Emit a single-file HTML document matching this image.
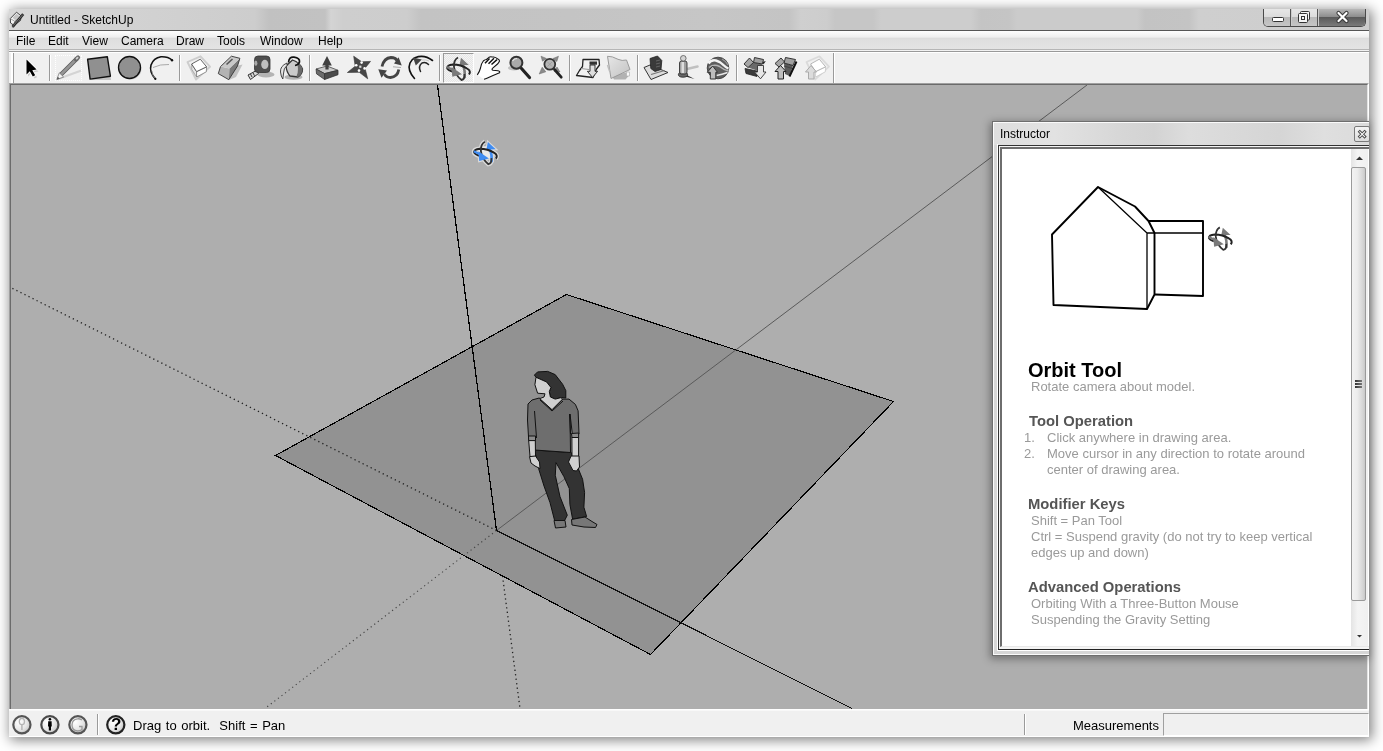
<!DOCTYPE html>
<html><head><meta charset="utf-8">
<style>
*{margin:0;padding:0;box-sizing:border-box}
html,body{width:1383px;height:751px;overflow:hidden;background:#fff;font-family:"Liberation Sans",sans-serif;}
.a{position:absolute}
svg.a{overflow:visible}
.t{position:absolute;white-space:nowrap;font-size:12px;color:#000;line-height:14px;will-change:transform}
#shadow{position:absolute;left:9px;top:9px;width:1360px;height:728px;background:#f0f0f0;box-shadow:2px 2px 12px 1px rgba(0,0,0,0.5);}
#title{position:absolute;left:9px;top:9px;width:1360px;height:22px;background:linear-gradient(90deg,#d8d8d8 0px,#d2d2d2 120px,#cdcdcd 246px,#c1c1c1 260px,#c2c2c2 316px,#d4d4d4 322px,#cecece 334px,#cdcdcd 398px,#c3c3c3 412px,#c4c4c4 560px,#c6c6c6 700px,#c4c4c4 780px,#cfcfcf 792px,#cdcdcd 818px,#c6c6c6 826px,#c6c6c6 864px,#cdcdcd 872px,#cdcdcd 962px,#c4c4c4 972px,#c5c5c5 1000px,#cbcbcb 1008px,#cbcbcb 1128px,#c3c3c3 1136px,#c4c4c4 1180px,#cfcfcf 1190px,#cdcdcd 1360px);border-bottom:1px solid #555;}
#menu{position:absolute;left:9px;top:31px;width:1360px;height:18px;background:linear-gradient(#fdfdfd 0px,#f6f6f6 3px,#eeeeee 6px,#dcdcdc 7.5px,#dfdfdf 9px,#e4e4e4 18px);}
.hl{position:absolute;left:9px;width:1360px;height:1px}
#tb{position:absolute;left:9px;top:53px;width:1360px;height:30px;background:#f0f0f0;}
#vp{position:absolute;left:9px;top:83px;width:1360px;height:627px;background:#aeaeae;border-top:1px solid #a0a0a0;border-left:1px solid #a0a0a0;border-right:1px solid #fff;border-bottom:1px solid #fff;overflow:hidden}
#vpi{position:absolute;left:0;top:0;right:0;bottom:0;border-top:1px solid #6b6b6b;border-left:1px solid #6b6b6b;border-right:1px solid #e3e3e3;overflow:hidden}
#sb{position:absolute;left:9px;top:710px;width:1360px;height:27px;background:#f0f0f0;border-bottom:1px solid #fff}
.vs{position:absolute;width:1px;background:#9a9a9a;}
</style></head>
<body>
<div id="shadow"></div>
<div id="title"></div>
<div class="t" style="left:30px;top:13px">Untitled - SketchUp</div>
<div id="menu"></div>
<div class="hl" style="top:49px;background:#b6b6b6"></div>
<div class="hl" style="top:50px;background:#f2f2f2"></div>
<div class="hl" style="top:51px;background:#999"></div>
<div class="hl" style="top:52px;background:#fff"></div>
<div class="t" style="left:16px;top:34px">File</div>
<div class="t" style="left:48px;top:34px">Edit</div>
<div class="t" style="left:82px;top:34px">View</div>
<div class="t" style="left:121px;top:34px">Camera</div>
<div class="t" style="left:176px;top:34px">Draw</div>
<div class="t" style="left:217px;top:34px">Tools</div>
<div class="t" style="left:260px;top:34px">Window</div>
<div class="t" style="left:318px;top:34px">Help</div>
<div id="tb"></div>
<!-- title icon -->
<svg class="a" style="left:0;top:0" width="40" height="40" viewBox="0 0 40 40">
<path d="M10.3 18.5 L16.5 12.2 L21.2 16 L20.5 20.5 L14 25.3 L10.5 23 Z" fill="#f2f2f2" stroke="#333" stroke-width="0.9" stroke-linejoin="round"/>
<path d="M12.5 17.8 L16.5 13.8 L19.5 16.3 L15.2 20 Z" fill="#c4c4c4"/>
<path d="M10.5 18.7 L14.6 21.2 L21 16.2 M14.6 21.2 L14 25" fill="none" stroke="#8a8a8a" stroke-width="0.7"/>
<path d="M12.6 26.8 L23.2 14.2" stroke="#2a2a2a" stroke-width="2.7"/>
<path d="M13.3 25.6 L22.8 14.6" stroke="#8a8a8a" stroke-width="0.8"/>
<path d="M11.8 27.8 L13.4 25.2 L14 26.6 Z" fill="#444"/>
</svg>
<!-- caption buttons -->
<div class="a" style="left:1263px;top:9px;width:103px;height:18px;border:1px solid #4a4a4a;border-top:none;border-radius:0 0 5px 5px;overflow:hidden;background:#ccc">
  <div class="a" style="left:0;top:0;width:27px;height:17px;background:linear-gradient(#e6e6e6 0%,#dcdcdc 45%,#b9b9b9 50%,#c6c6c6 100%);border-right:1px solid #555"></div>
  <div class="a" style="left:28px;top:0;width:26px;height:17px;background:linear-gradient(#e6e6e6 0%,#dcdcdc 45%,#b9b9b9 50%,#c6c6c6 100%);border-right:1px solid #555"></div>
  <div class="a" style="left:55px;top:0;width:47px;height:17px;background:linear-gradient(#b8b8b8 0%,#8e8e8e 45%,#5a5a5a 50%,#7a7a7a 100%);"></div>
</div>
<svg class="a" style="left:0;top:0" width="1" height="1">
<rect x="1272.5" y="17.5" width="11" height="4" rx="1" fill="#fff" stroke="#333" stroke-width="1"/>
<rect x="1300.5" y="11.5" width="9" height="8.5" rx="1" fill="#f4f4f4" stroke="#333" stroke-width="1"/>
<rect x="1298.5" y="13.5" width="9" height="9" rx="1" fill="#f4f4f4" stroke="#333" stroke-width="1"/>
<rect x="1301.5" y="16.5" width="3" height="3" fill="none" stroke="#333" stroke-width="1"/>
<path d="M1338.5 13 L1346.5 21 M1346.5 13 L1338.5 21" stroke="#3a3a3a" stroke-width="4.2" stroke-linecap="round"/>
<path d="M1338.5 13 L1346.5 21 M1346.5 13 L1338.5 21" stroke="#fff" stroke-width="2.2" stroke-linecap="round"/>
</svg>
<!-- toolbar grip & separators -->
<div class="vs" style="left:11px;top:53px;height:30px;background:#fff;width:2px"></div>
<div class="vs" style="left:13px;top:53px;height:30px;background:#9a9a9a"></div>
<div class="vs" style="left:49px;top:55px;height:26px"></div><div class="vs" style="left:50px;top:55px;height:26px;background:#fff"></div>
<div class="vs" style="left:179px;top:55px;height:26px"></div><div class="vs" style="left:180px;top:55px;height:26px;background:#fff"></div>
<div class="vs" style="left:309px;top:55px;height:26px"></div><div class="vs" style="left:310px;top:55px;height:26px;background:#fff"></div>
<div class="vs" style="left:439px;top:55px;height:26px"></div><div class="vs" style="left:440px;top:55px;height:26px;background:#fff"></div>
<div class="vs" style="left:569px;top:55px;height:26px"></div><div class="vs" style="left:570px;top:55px;height:26px;background:#fff"></div>
<div class="vs" style="left:637px;top:55px;height:26px"></div><div class="vs" style="left:638px;top:55px;height:26px;background:#fff"></div>
<div class="vs" style="left:736px;top:55px;height:26px"></div><div class="vs" style="left:737px;top:55px;height:26px;background:#fff"></div>
<div class="vs" style="left:833px;top:53px;height:30px"></div><div class="vs" style="left:834px;top:53px;height:30px;background:#fff"></div>
<!-- focus rect around pencil -->
<div class="a" style="left:55px;top:55px;width:27px;height:26px;border:1px dotted #fff"></div>
<!-- pressed orbit button -->
<div class="a" style="left:443px;top:53px;width:31px;height:30px;border-top:1px solid #999;border-left:1px solid #999;border-right:1px solid #fff;border-bottom:1px solid #fff;background-color:#f4f4f4;background-image:linear-gradient(45deg,#e6e6e6 25%,transparent 25%,transparent 75%,#e6e6e6 75%),linear-gradient(45deg,#e6e6e6 25%,transparent 25%,transparent 75%,#e6e6e6 75%);background-size:2px 2px;background-position:0 0,1px 1px"></div>
<svg class="a" style="left:0;top:0" width="1383" height="751" viewBox="0 0 1383 751">
<!-- select arrow -->
<path d="M28 62 L28 76.5 L31.5 73.5 L34.5 78.5 L37 77.3 L34.2 72.3 L38.5 71.5 Z" fill="#000" opacity="0.15"/>
<path d="M26.5 59.5 L26.5 74.5 L29.8 71.3 L32.8 76.6 L35.2 75.3 L32.3 70.2 L36.6 69.5 Z" fill="#fff" stroke="#fff" stroke-width="1.6" stroke-linejoin="round"/>
<path d="M26.5 59.5 L26.5 74.5 L29.8 71.3 L32.8 76.6 L35.2 75.3 L32.3 70.2 L36.6 69.5 Z" fill="#000"/>
<!-- pencil -->
<path d="M58 79 L80 71" stroke="#d4d4d4" stroke-width="2.2" stroke-linecap="round"/>
<path d="M61 74.5 L77 58.5" stroke="#5a5a5a" stroke-width="4.2"/>
<path d="M61 74.5 L77 58.5" stroke="#969696" stroke-width="2.6"/>
<path d="M76 59.5 L78 57.5" stroke="#6a6a6a" stroke-width="4.2" stroke-linecap="round"/>
<path d="M76.6 58.6 L77.6 57.6" stroke="#d0d0d0" stroke-width="1.8" stroke-linecap="round"/>
<path d="M56.8 79.5 L59.3 72.8 L63.6 77 Z" fill="#f4f4f4" stroke="#6a6a6a" stroke-width="0.7" stroke-linejoin="round"/>
<path d="M56.8 79.5 L57.8 76.8 L59.6 78.5 Z" fill="#555"/>
<!-- rectangle -->
<path d="M92 78 L110.5 76 L111 80 L91 80 Z" fill="#c4c4c4"/>
<path d="M87.6 59.2 L107.3 56.7 L110.4 76.2 L90.1 79.1 Z" fill="#909090" stroke="#111" stroke-width="1.4" stroke-linejoin="round"/>
<!-- circle -->
<circle cx="130.5" cy="68.5" r="11" fill="#c8c8c8"/>
<circle cx="129.5" cy="67.5" r="11" fill="#909090" stroke="#111" stroke-width="1.3"/>
<!-- arc -->
<path d="M153 67.5 Q160 64 169 64.5" stroke="#a0a0a0" stroke-width="0.9" fill="none"/>
<path d="M155.5 79 Q149 72 151 65 Q153.5 58 161 56.8 Q168 56.5 172 60" stroke="#111" stroke-width="1.6" fill="none" stroke-linecap="round"/>
<circle cx="172" cy="60.3" r="1.2" fill="#111"/><circle cx="155.3" cy="78.8" r="1.1" fill="#111"/>
<path d="M152 71 Q152 76 155 78" stroke="#888" stroke-width="0.8" fill="none"/>
<!-- component -->
<path d="M187.5 62 L200.5 56.3 L210 66.7 L196 79.5 Z" fill="none" stroke="#cdcdcd" stroke-width="1.9" stroke-linejoin="round"/>
<path d="M191.6 64 L196.6 71.6 L196.6 77 L191.8 69.5 Z" fill="#e6e6e6" stroke="#9a9a9a" stroke-width="0.8"/>
<path d="M196.6 71.6 L206.6 66.8 L206.3 71.8 L196.6 77 Z" fill="#fff" stroke="#7a7a7a" stroke-width="0.8"/>
<path d="M191.6 64 L200.3 59.2 L206.6 66.8 L196.6 71.6 Z" fill="#fff" stroke="#555" stroke-width="0.9"/>
<!-- eraser -->
<path d="M236 66 L242.5 64.5 L236 77 L229 80 Z" fill="#c2c2c2"/>
<path d="M218.3 73.6 L220.5 66.6 L229.5 68.5 L228.8 79.7 Z" fill="#b3b3b3"/>
<path d="M229.5 68.5 L239.9 58.3 L237.5 66 L228.8 79.7 Z" fill="#7a7a7a"/>
<path d="M220.5 66.6 L231.4 56.2 L239.9 58.3 L229.5 68.5 Z" fill="#c9c9c9"/>
<path d="M218.3 73.6 L220.5 66.6 L231.4 56.2 L239.9 58.3 L237.5 66 L228.8 79.7 Z" fill="none" stroke="#333" stroke-width="0.9" stroke-linejoin="round"/>
<path d="M226.5 64.5 L232.5 59" stroke="#555" stroke-width="1.6"/>
<!-- tape -->
<ellipse cx="266" cy="74.5" rx="8.5" ry="3" fill="#b4b4b4"/>
<path d="M248 75 L256.5 70.5 L258.5 73.5 L250.5 79.5 Z" fill="#d8d8d8" stroke="#333" stroke-width="1"/>
<path d="M250.5 74 L252 77 M253 72.8 L254.5 75.8" stroke="#333" stroke-width="1"/>
<rect x="254.5" y="56" width="15.5" height="16.5" rx="3.5" fill="#4e4e4e" stroke="#333" stroke-width="0.8"/>
<ellipse cx="264.8" cy="64.4" rx="3.6" ry="4.6" fill="#bfbfbf"/>
<ellipse cx="255.8" cy="63.2" rx="1.6" ry="2.6" fill="#a8a8a8"/>
<!-- paint bucket -->
<ellipse cx="293.5" cy="77.2" rx="9" ry="2.6" fill="#b3b3b3"/>
<path d="M286 66 L292.5 60 Q300 62.5 302.5 69 Q302.5 74 298 77 L290 76 Q286.5 72 286 66 Z" fill="#cacaca" stroke="#333" stroke-width="1.3" stroke-linejoin="round"/>
<path d="M296.5 61.5 Q301 64 302.5 69 Q302.5 74 298 77 L296.5 76.3 Q299.5 70 296.5 61.5 Z" fill="#6a6a6a"/>
<path d="M288.5 62.5 Q289 56.5 294 57.2 Q300 58 299.5 62 Q298.5 65 295 65.5" stroke="#111" stroke-width="1.7" fill="none"/>
<path d="M287 63 Q280 66 280.5 72 Q281 76.5 282.8 79 L283.6 73 Q283.5 68 287 65.5 Z" fill="#e6e6e6" stroke="#333" stroke-width="0.9" stroke-linejoin="round"/>
<!-- push pull -->
<path d="M316.1 69 L327 66 L338 70.3 L324.6 73.6 Z" fill="#c9c9c9" stroke="#444" stroke-width="0.8"/>
<path d="M316.1 69 L324.6 73.6 L324.6 79.5 L316.5 73.8 Z" fill="#6c6c6c" stroke="#333" stroke-width="0.8"/>
<path d="M324.6 73.6 L338 70.3 L338 74.7 L324.6 79.5 Z" fill="#4c4c4c" stroke="#333" stroke-width="0.8"/>
<path d="M327 56 L331.8 65.5 L328.6 65.5 L328.6 69.4 L325.4 69.4 L325.4 65.5 L322.2 65.5 Z" fill="#404040"/>
<!-- move -->
<path d="M353.7 56.2 L361.8 61.8 L370.5 61.4 L365 68.2 L367.7 78.8 L359.3 72.3 L347.4 72.5 L355.2 66.2 Z" fill="#474747" stroke="#333" stroke-width="0.6" stroke-linejoin="round"/>
<circle cx="356.2" cy="65.2" r="1.3" fill="#fff"/><circle cx="361.6" cy="62.6" r="1.3" fill="#fff"/>
<circle cx="364.6" cy="68.4" r="1.3" fill="#fff"/><circle cx="359" cy="70.6" r="1.3" fill="#fff"/>
<rect x="359.2" y="65.6" width="2.2" height="2.2" fill="#ddd"/>
<!-- rotate -->
<path d="M382 66.5 Q384 58 391 57.5 Q395.5 57.5 397 60.5" stroke="#444" stroke-width="2.8" fill="none"/>
<path d="M398.6 57.3 L401.8 65.5 L394 63.5 Z" fill="#444"/>
<path d="M393 66.8 L401 67.5" stroke="#aaa" stroke-width="1"/>
<path d="M398.8 69.5 Q397.5 77 390.5 77.5 Q386 77.5 384.5 74" stroke="#444" stroke-width="2.8" fill="none"/>
<path d="M378.3 69.2 L387 70.5 L381.5 77.8 Z" fill="#444"/>
<!-- follow me -->
<path d="M414.5 78.5 Q407 70 410 63 Q412 59 415 57.8 Q424 54 432.5 60.5" stroke="#111" stroke-width="1.6" fill="none" stroke-linecap="round"/>
<path d="M413 57.5 L421.8 59.5 L415.8 65.5 Z" fill="#444"/>
<path d="M420.5 71.5 Q418 66 422 63 Q425.5 61.5 428.5 64.5" stroke="#222" stroke-width="1.5" fill="none" stroke-linecap="round"/>
<path d="M422 60 Q426 59.5 429 61" stroke="#bbb" stroke-width="0.8" fill="none"/>
<!-- orbit -->
<path d="M461 57.8 L468.8 65 L459.5 65.2 Z" fill="#7a7a7a"/>
<path d="M462.5 64.5 Q465.5 70 464.5 78" stroke="#7a7a7a" stroke-width="2.6" fill="none"/>
<path d="M469 74.5 Q471.5 71 467 68.5 Q461 64.5 453 64.5 Q446.5 65 447.3 68.5 Q448 70 452 71.5" stroke="#222" stroke-width="2" fill="none"/>
<path d="M458 57.5 Q453.5 60 454 67 Q455 75 461.5 80 Q465 79.5 464.5 74" stroke="#333" stroke-width="1.8" fill="none"/>
<path d="M451.5 67 L452.3 76.8 L462 74.3 Z" fill="#7a7a7a"/>
<path d="M447 67 L455 71" stroke="#7a7a7a" stroke-width="2.2"/>
<!-- pan hand -->
<path d="M477.3 74.8 Q479.5 72 480.5 68 Q481.5 63 483.3 61 Q485 59.5 486.5 59.5 L489 57.3 Q490.5 56.5 492 57 L493.5 57 Q496 57.3 497.5 58.8 Q499.5 59.8 499.5 61 Q499 62.5 497.5 64 L493 67.8 Q491 69.5 493 70.3 L498 70.8 Q500.5 71.5 499.5 72.8 Q497 74 493 75.5 L487.5 78 Q485.5 79 484 79.3" fill="#fff" stroke="#111" stroke-width="1.1" stroke-linejoin="round"/>
<path d="M485 63.3 L489.5 58.6 M488.5 63.8 L494 58.3 M491.5 64.5 L497 59.6" stroke="#111" stroke-width="1.5"/>
<!-- zoom -->
<ellipse cx="514" cy="68" rx="6" ry="2.5" fill="#c0c0c0"/>
<path d="M521.5 68.5 L529.5 77.5" stroke="#222" stroke-width="3.2" stroke-linecap="round"/>
<circle cx="516.4" cy="62.7" r="6" fill="#a9a9a9" stroke="#333" stroke-width="2"/>
<path d="M512.5 61 Q514 58.5 517 58.5" stroke="#e8e8e8" stroke-width="1.2" fill="none"/>
<!-- zoom extents -->
<path d="M541 56.2 L546.5 58.5 L542.5 61.2 Z M558.5 56.2 L553 58.5 L556.8 61.5 Z M539.2 74 L542.2 67.2 L545.8 71.8 Z M557 67 L560 72 L554.2 71.2 Z" fill="#8a8a8a" stroke="#666" stroke-width="0.5"/>
<path d="M554.5 69.5 L561.2 77.2" stroke="#222" stroke-width="2.8" stroke-linecap="round"/>
<circle cx="549.8" cy="64.2" r="5.4" fill="#b5b5b5" stroke="#333" stroke-width="1.8"/>
<path d="M547.5 62 L552 66.5 M552 62 L547.5 66.5" stroke="#999" stroke-width="0.8"/>
<!-- add location -->
<path d="M576.5 75.5 L579.5 70.5 L582.5 66.5 L583 59.5 L599 59.5 L599.5 65 L596.5 69 L593 77.5 Z" fill="#f2f2f2" stroke="#222" stroke-width="1.3" stroke-linejoin="round"/>
<path d="M581 68.5 L589 69.5" stroke="#999" stroke-width="1.2"/>
<rect x="589.5" y="61.5" width="7.5" height="3.2" fill="#333"/>
<path d="M590 65 L595 65 L595 71.3 L597.6 71.3 L592.5 77.5 L587.4 71.3 L590 71.3 Z" fill="#ddd" stroke="#222" stroke-width="0.9" stroke-linejoin="round"/>
<!-- toggle terrain -->
<defs><linearGradient id="terr" x1="0" y1="0" x2="1" y2="1"><stop offset="0" stop-color="#e6e6e6"/><stop offset="1" stop-color="#c2c2c2"/></linearGradient></defs>
<path d="M612 76 L626 72.5 L629 75.5 L625.5 79.5 L614 79.5 Z" fill="#b2b2b2"/>
<path d="M607.5 56.3 Q612 56 618 59.3 Q622 61.2 626.5 60 L630 69.5 L611 78.5 Z" fill="url(#terr)" stroke="#9a9a9a" stroke-width="1" stroke-linejoin="round"/>
<path d="M626.5 72 L629.5 72 L629.5 76 L626.5 76 Z" fill="#fafafa" stroke="#aaa" stroke-width="0.6"/>
<path d="M607.5 65 L609.5 71" stroke="#bdbdbd" stroke-width="1.5"/>
<!-- place model -->
<path d="M644 67.5 L650 65 L668 72.5 L651 79.5 Z" fill="#dcdcdc" stroke="#333" stroke-width="1" stroke-linejoin="round"/>
<path d="M651 74.5 L664.5 70.5" stroke="#777" stroke-width="1.3"/>
<path d="M650 58.5 L657.5 56 L661.8 60.5 L661 69.5 L655 71.5 L650.8 68.5 Z" fill="#3a3a3a" stroke="#222" stroke-width="0.8"/>
<path d="M656 61 L660 60 M656 64 L660 63 M656 67 L660 66" stroke="#777" stroke-width="0.7"/>
<!-- current view -->
<path d="M687 69 L697.5 66.5" stroke="#c0c0c0" stroke-width="2.6" stroke-linecap="round"/>
<path d="M683 73 L694.5 79 L685.5 76.5 Z" fill="#333"/>
<ellipse cx="683" cy="74.6" rx="4.6" ry="2.6" fill="#666" stroke="#222" stroke-width="0.8"/>
<rect x="679.5" y="61" width="7.5" height="13" rx="2" fill="#a0a0a0" stroke="#333" stroke-width="0.9"/>
<rect x="681.5" y="62" width="2.5" height="11" fill="#ddd"/>
<circle cx="683.3" cy="58.3" r="2.8" fill="#d4d4d4" stroke="#555" stroke-width="0.8"/>
<!-- google earth -->
<circle cx="718" cy="68" r="10.8" fill="#5e5e5e" stroke="#333" stroke-width="0.8"/>
<path d="M708.5 63.5 Q711 59.5 716 60.5 Q721 62 724 65.5 Q726.5 68 728.5 68.5" stroke="#f4f4f4" stroke-width="2.4" fill="none"/>
<path d="M709 67.5 Q714 63.5 719.5 66.5 Q724 70 728.5 71" stroke="#b5b5b5" stroke-width="1.5" fill="none"/>
<path d="M716.5 75.5 Q722 74.5 727.5 72.5" stroke="#e8e8e8" stroke-width="1.6" fill="none"/>
<path d="M722 59 Q726 61 728 65" stroke="#999" stroke-width="1.2" fill="none"/>
<path d="M712.7 66 L717.5 72.3 L715.8 72.3 L715.8 79 L710.3 79 L710.3 72.3 L707.3 72.3 Z" fill="#bdbdbd" stroke="#333" stroke-width="1" stroke-linejoin="round"/>
<!-- get models -->
<path d="M745 68.5 L757 71 L757 76.5 L746 73.5 Z" fill="#3a3a3a" stroke="#222" stroke-width="0.8"/>
<path d="M748 67.5 L753.5 62.5 L762.5 64 L757 70.5 Z" fill="#6a6a6a"/>
<path d="M744 64 L749.5 58 L753.5 62.5 L748 67.5 Z" fill="#a5a5a5" stroke="#222" stroke-width="0.9" stroke-linejoin="round"/>
<path d="M754.5 57.5 L763.5 59.5 L762.5 64 L753.5 62.5 Z" fill="#a0a0a0" stroke="#222" stroke-width="0.9" stroke-linejoin="round"/>
<path d="M762.5 62 L765.8 61 L763.5 64.5 Z" fill="#222"/>
<path d="M757.5 65.5 L763.5 65.5 L763.5 72 L766 72 L760.5 78.8 L754.5 72 L757.5 72 Z" fill="#e6e6e6" stroke="#333" stroke-width="0.9" stroke-linejoin="round"/>
<!-- share model -->
<path d="M784 63 L793 65.5 L789.5 76 L785 74 Z" fill="#5a5a5a"/>
<path d="M785.5 57.5 L795.5 59.5 L793 65.5 L784 63 Z" fill="#a0a0a0" stroke="#222" stroke-width="0.9" stroke-linejoin="round"/>
<path d="M784 66 L792.5 68.5" stroke="#444" stroke-width="1.2"/>
<path d="M796.5 61.5 L789.5 76.5" stroke="#111" stroke-width="2"/>
<path d="M775 63.5 L781 58 L784.5 62 L779 67 Z" fill="#a5a5a5" stroke="#222" stroke-width="0.9" stroke-linejoin="round"/>
<path d="M780.5 65.5 L786 71.5 L783.5 71.5 L783.5 79 L778 79 L778 71.5 L775 71.5 Z" fill="#bdbdbd" stroke="#222" stroke-width="1" stroke-linejoin="round"/>
<!-- share component (disabled) -->
<path d="M806.5 62 L819.5 56.3 L829 66.7 L815 79.5 Z" fill="none" stroke="#dadada" stroke-width="1.8" stroke-linejoin="round"/>
<path d="M815.6 71.6 L825.6 66.8 L825.3 71.8 L815.6 77 Z" fill="#fff" stroke="#c8c8c8" stroke-width="0.8"/>
<path d="M810.6 64 L819.3 59.2 L825.6 66.8 L815.6 71.6 Z" fill="#fff" stroke="#b0b0b0" stroke-width="0.9"/>
<path d="M811 65.5 L816.5 72 L814 72 L814 79 L808.5 79 L808.5 72 L805.5 72 Z" fill="#dcdcdc" stroke="#aaa" stroke-width="1" stroke-linejoin="round"/>
</svg>
<div id="vp"><div id="vpi">
<svg width="1383" height="751" viewBox="0 0 1383 751" style="position:absolute;left:-11px;top:-85px">
  <polygon points="566.5,294.5 893.5,401.5 650.5,654.5 275.5,455.5" fill="#929292"/>
  <g stroke="#222" stroke-width="1.3" stroke-dasharray="1.3 3.2" fill="none">
    <line x1="496.5" y1="530.5" x2="11" y2="287.7"/>
    <line x1="502.5" y1="576" x2="520" y2="708.5"/>
  </g>
  <line x1="496.5" y1="530.5" x2="265" y2="708.5" stroke="#444" stroke-width="1.1" stroke-dasharray="1.2 3.3"/>
  <line x1="496.5" y1="530.5" x2="1087" y2="85" stroke="#5a5a5a" stroke-width="1"/>
  <polygon points="566.5,294.5 893.5,401.5 650.5,654.5 275.5,455.5" fill="none" stroke="#000" stroke-width="1.15" shape-rendering="crispEdges"/>
  <line x1="496.5" y1="530.5" x2="852" y2="708.5" stroke="#111" stroke-width="1.15" shape-rendering="crispEdges"/>
  <line x1="496.5" y1="530.5" x2="437.5" y2="85" stroke="#000" stroke-width="1.2" shape-rendering="crispEdges"/>
  <!-- figure -->
  <g stroke="#111" stroke-width="1" stroke-linejoin="round">
    <polygon points="534.6,450 571.3,452.6 577.2,466 582.6,479.3 584.6,492.6 583.9,507.2 586.6,516.5 572.6,519.2 569.9,504.5 569.3,488.6 563.9,476.6 556,462.6 555.3,475.3 560,496.6 567.3,515.2 564.6,520.5 554.6,520.5 550,502.6 544,486 538.6,468.6" fill="#333"/>
    <polygon points="554,520.5 565,520.5 566,527 555.5,528" fill="#777"/>
    <polygon points="571.5,519.5 585,517 592,521.5 597,524.5 595.5,527.5 584,527 572,525" fill="#777"/>
    <polygon points="528,404 532,400 539.2,398 552,409.7 562.6,399.1 569,399.1 575.4,404.4 578.1,410.8 579,434 572.5,435.5 570,414 570.5,452.5 534.6,450 535,440 528.7,440 527.5,420" fill="#6e6e6e"/>
    <polygon points="528.5,436 535.5,436 535.5,441 528.7,441" fill="#8a8a8a"/>
    <polygon points="571.5,433.5 578.7,433 578.6,438 572,438" fill="#8a8a8a"/>
    <polygon points="528.7,440.6 535.3,440.6 535.5,456.6 530,456.6" fill="#cfcfcf"/>
    <polygon points="529.5,456.6 535.5,456 539.5,462 540,468.6 535,466 531,463" fill="#cfcfcf"/>
    <polygon points="571.9,437.5 578.6,437.5 578.6,456.6 572,457" fill="#cfcfcf"/>
    <polygon points="571,456 579,456 579.5,467 576.5,471 573,470.5 568.5,462" fill="#cfcfcf"/>
    <polygon points="534.4,375.1 537.6,371.9 547.7,371.4 555.2,374.6 562.6,384.2 565.8,390.6 565.8,398 561.6,397.5 555.2,399.1 550.4,397 549.3,391.6 550.9,387.4 546.6,382 536,377.3" fill="#333"/>
    <polygon points="536,377.3 546.6,382 550.9,387.4 549.3,391.6 550.4,397 555.2,399.1 561.6,397.5 562.1,399.6 552,409.7 539.7,398.6 544,397 545,393.8 537.6,393.2 534.9,384.7" fill="#cfcfcf"/>
  </g>
  <path d="M534.5 411 L536.5 438 M569.5 414 L570.5 434 M540 400 L552 411 L563 401" stroke="#111" stroke-width="1" fill="none"/>
  <!-- orbit cursor -->
  <g transform="translate(26.9,84.2)">
  <g opacity="0.85"><path d="M461 57.8 L468.8 65 L459.5 65.2 Z" fill="#e4e4e4" stroke="#e4e4e4" stroke-width="2.2"/>
<path d="M462.5 64.5 Q465.5 70 464.5 78" stroke="#e4e4e4" stroke-width="5.1" fill="none"/>
<path d="M469 74.5 Q471.5 71 467 68.5 Q461 64.5 453 64.5 Q446.5 65 447.3 68.5 Q448 70 452 71.5" stroke="#e4e4e4" stroke-width="4.5" fill="none"/>
<path d="M458 57.5 Q453.5 60 454 67 Q455 75 461.5 80 Q465 79.5 464.5 74" stroke="#e4e4e4" stroke-width="4.3" fill="none"/>
<path d="M451.5 67 L452.3 76.8 L462 74.3 Z" fill="#e4e4e4" stroke="#e4e4e4" stroke-width="2.2"/>
<path d="M447 67 L455 71" stroke="#e4e4e4" stroke-width="4.7"/>
</g>
  <ellipse cx="458.5" cy="68.5" rx="7.5" ry="6.5" fill="#e9e9e9"/>
  <path d="M461 57.8 L468.8 65 L459.5 65.2 Z" fill="#3f8cf2"/>
<path d="M462.5 64.5 Q465.5 70 464.5 78" stroke="#3f8cf2" stroke-width="2.6" fill="none"/>
<path d="M469 74.5 Q471.5 71 467 68.5 Q461 64.5 453 64.5 Q446.5 65 447.3 68.5 Q448 70 452 71.5" stroke="#222" stroke-width="2" fill="none"/>
<path d="M458 57.5 Q453.5 60 454 67 Q455 75 461.5 80 Q465 79.5 464.5 74" stroke="#333" stroke-width="1.8" fill="none"/>
<path d="M451.5 67 L452.3 76.8 L462 74.3 Z" fill="#3f8cf2"/>
<path d="M447 67 L455 71" stroke="#3f8cf2" stroke-width="2.2"/>

  </g>
</svg>
</div></div>
<!-- Instructor panel -->
<div class="a" style="left:992px;top:121px;width:377px;height:535px;background:#6e6e6e;box-shadow:-1px 2px 8px 1px rgba(0,0,0,0.35)"></div>
<div class="a" style="left:993px;top:122px;width:376px;height:533px;background:#d6d6d6;border-top:1px solid #fafafa;border-left:1px solid #fafafa;border-bottom:1px solid #fafafa"></div>
<div class="a" style="left:994px;top:123px;width:375px;height:22px;background:linear-gradient(90deg,#dedede 0px,#e2e2e2 60px,#d6d6d6 130px,#d3d3d3 160px,#dddddd 195px,#d8d8d8 250px,#d5d5d5 285px,#dfdfdf 330px,#dbdbdb 375px);"></div>
<div class="t" style="left:1000px;top:127px">Instructor</div>
<div class="a" style="left:1354px;top:126px;width:16px;height:16px;border:1px solid #7a7a7a;border-radius:2px;background:linear-gradient(#f4f4f4,#dcdcdc);"></div>
<svg class="a" style="left:1356px;top:128px" width="12" height="12" viewBox="0 0 12 12"><path d="M3.8 3.8 L8.6 8.6 M8.6 3.8 L3.8 8.6" stroke="#444" stroke-width="3" stroke-linecap="square"/><path d="M3.8 3.8 L8.6 8.6 M8.6 3.8 L3.8 8.6" stroke="#fafafa" stroke-width="1.1" stroke-linecap="square"/></svg>
<div class="a" style="left:997px;top:144px;width:372px;height:507px;border-left:1px solid #fff;border-bottom:1px solid #fff;"></div>
<div class="a" style="left:998px;top:145px;width:371px;height:505px;border-top:1px solid #333;border-left:1px solid #333;border-bottom:1px solid #222;background:#f4f4f4"></div>
<div class="a" style="left:1000px;top:147px;width:369px;height:500px;border-top:2px solid #6e6e6e;border-left:2px solid #6e6e6e;border-bottom:1px solid #e8e8e8;background:#fff"></div>
<!-- scrollbar -->
<div class="a" style="left:1351px;top:149px;width:17px;height:497px;background:linear-gradient(90deg,#e4e4e4,#f4f4f4 40%,#f0f0f0);"></div>
<svg class="a" style="left:1351px;top:149px" width="17" height="18" viewBox="0 0 17 18"><path d="M5 11 L8.5 7.5 L12 11 Z" fill="#333"/></svg>
<div class="a" style="left:1351px;top:167px;width:15px;height:434px;border:1px solid #9a9a9a;border-radius:2px;background:linear-gradient(90deg,#f2f2f2 0%,#ececec 40%,#d4d4d4 85%,#c8c8c8 100%);"></div>
<div class="a" style="left:1355px;top:380px;width:7px;height:2px;background:linear-gradient(90deg,#333,#777)"></div><div class="a" style="left:1355px;top:383px;width:7px;height:2px;background:linear-gradient(90deg,#333,#777)"></div><div class="a" style="left:1355px;top:386px;width:7px;height:2px;background:linear-gradient(90deg,#333,#777)"></div>
<svg class="a" style="left:1351px;top:628px" width="17" height="18" viewBox="0 0 17 18"><path d="M6 7 L8.5 9.5 L11 7 Z" fill="#333"/></svg>
<svg class="a" style="left:0;top:0" width="1383" height="751" viewBox="0 0 1383 751"><g transform="translate(761.8,169.9)"><!-- orbit -->
<path d="M461 57.8 L468.8 65 L459.5 65.2 Z" fill="#7a7a7a"/>
<path d="M462.5 64.5 Q465.5 70 464.5 78" stroke="#7a7a7a" stroke-width="2.6" fill="none"/>
<path d="M469 74.5 Q471.5 71 467 68.5 Q461 64.5 453 64.5 Q446.5 65 447.3 68.5 Q448 70 452 71.5" stroke="#222" stroke-width="2" fill="none"/>
<path d="M458 57.5 Q453.5 60 454 67 Q455 75 461.5 80 Q465 79.5 464.5 74" stroke="#333" stroke-width="1.8" fill="none"/>
<path d="M451.5 67 L452.3 76.8 L462 74.3 Z" fill="#7a7a7a"/>
<path d="M447 67 L455 71" stroke="#7a7a7a" stroke-width="2.2"/>
</g></svg>
<!-- house drawing -->
<svg class="a" style="left:0;top:0" width="1383" height="751" viewBox="0 0 1383 751">
<g fill="none" stroke="#000" stroke-width="1.9" stroke-linejoin="round">
<path d="M1052 234.5 L1098 187 L1135 206.5 L1148.5 221 L1154.5 233 L1154.5 294.5 L1147 309 L1053.5 305 Z"/>
<path d="M1148.5 221 H1203 V296 L1155 294.5"/>
</g>
<g fill="none" stroke="#000" stroke-width="1.3">
<path d="M1098 187 L1147 233 L1147 309 M1147 233 H1154.5 M1155 233 H1203"/>
</g>
</svg>
<div class="t" style="left:1028px;top:360px;font-size:20px;font-weight:bold;line-height:20px">Orbit Tool</div>
<div class="t" style="left:1031px;top:380px;font-size:13px;color:#9a9a9a">Rotate camera about model.</div>
<div class="t" style="left:1029px;top:414px;font-size:14.8px;font-weight:bold;color:#555">Tool Operation</div>
<div class="t" style="left:1024px;top:431px;font-size:13px;color:#9a9a9a">1.</div>
<div class="t" style="left:1047px;top:431px;font-size:13px;color:#9a9a9a">Click anywhere in drawing area.</div>
<div class="t" style="left:1024px;top:447px;font-size:13px;color:#9a9a9a">2.</div>
<div class="t" style="left:1047px;top:447px;font-size:13px;color:#9a9a9a">Move cursor in any direction to rotate around</div>
<div class="t" style="left:1047px;top:463px;font-size:13px;color:#9a9a9a">center of drawing area.</div>
<div class="t" style="left:1028px;top:497px;font-size:14.8px;font-weight:bold;color:#555">Modifier Keys</div>
<div class="t" style="left:1031px;top:514px;font-size:13px;color:#9a9a9a">Shift = Pan Tool</div>
<div class="t" style="left:1031px;top:530px;font-size:13px;color:#9a9a9a">Ctrl = Suspend gravity (do not try to keep vertical</div>
<div class="t" style="left:1031px;top:546px;font-size:13px;color:#9a9a9a">edges up and down)</div>
<div class="t" style="left:1028px;top:580px;font-size:14.8px;font-weight:bold;color:#555">Advanced Operations</div>
<div class="t" style="left:1031px;top:597px;font-size:13px;color:#9a9a9a">Orbiting With a Three-Button Mouse</div>
<div class="t" style="left:1031px;top:613px;font-size:13px;color:#9a9a9a">Suspending the Gravity Setting</div>

<div id="sb"></div>
<div class="hl" style="top:709px;background:#fff"></div>
<div class="hl" style="top:710px;background:#f8f8f8"></div>
<div class="t" style="left:133px;top:719px;font-size:13px;word-spacing:1px">Drag to orbit.&nbsp; Shift = Pan</div>
<div class="t" style="left:1073px;top:719px;font-size:13px">Measurements</div>
<div class="vs" style="left:97px;top:714px;height:21px"></div><div class="vs" style="left:98px;top:714px;height:21px;background:#fff"></div>
<div class="vs" style="left:1024px;top:714px;height:21px"></div><div class="vs" style="left:1025px;top:714px;height:21px;background:#fff"></div>
<div class="a" style="left:1163px;top:713px;width:206px;height:23px;border-top:1px solid #a0a0a0;border-left:1px solid #a0a0a0;border-bottom:1px solid #fff;border-right:1px solid #fff;background:#f0f0f0"></div>
<svg class="a" style="left:0;top:0" width="1383" height="751" viewBox="0 0 1383 751">
<defs>
<radialGradient id="sg" cx="0.35" cy="0.35" r="0.75"><stop offset="0" stop-color="#ffffff"/><stop offset="0.6" stop-color="#e6e6e6"/><stop offset="1" stop-color="#bdbdbd"/></radialGradient>
</defs>
<circle cx="21.9" cy="724.8" r="8.6" fill="url(#sg)" stroke="#555" stroke-width="2.2"/>
<circle cx="49.9" cy="724.8" r="8.6" fill="url(#sg)" stroke="#4a4a4a" stroke-width="2.2"/>
<circle cx="77.9" cy="724.8" r="8.6" fill="url(#sg)" stroke="#555" stroke-width="2.2"/>
<circle cx="115.8" cy="724.8" r="8.6" fill="url(#sg)" stroke="#222" stroke-width="2.2"/>
<ellipse cx="21.9" cy="721.5" rx="2.6" ry="3.2" fill="none" stroke="#b5b5b5" stroke-width="1.3"/>
<path d="M21.9 724.7 L21.9 730" stroke="#b5b5b5" stroke-width="1.5"/>
<circle cx="49.9" cy="719.3" r="1.3" fill="#000"/>
<path d="M48.2 721.2 L51.6 721.2 L51.8 726.5 L51 726.5 L51 730.5 L48.8 730.5 L48.8 726.5 L48 726.5 Z" fill="#000"/>
<path d="M82 720 Q79.5 718.5 77.5 718.8 Q72 719.5 72 725 Q72 730.5 77.5 731 Q80.5 731 82 729.5 L82 726.5 L79 726.5" fill="none" stroke="#9a9a9a" stroke-width="1.3"/>
</svg>
<div class="t" style="left:111px;top:716px;font-size:17px;font-weight:bold;line-height:17px">?</div>
</body></html>
